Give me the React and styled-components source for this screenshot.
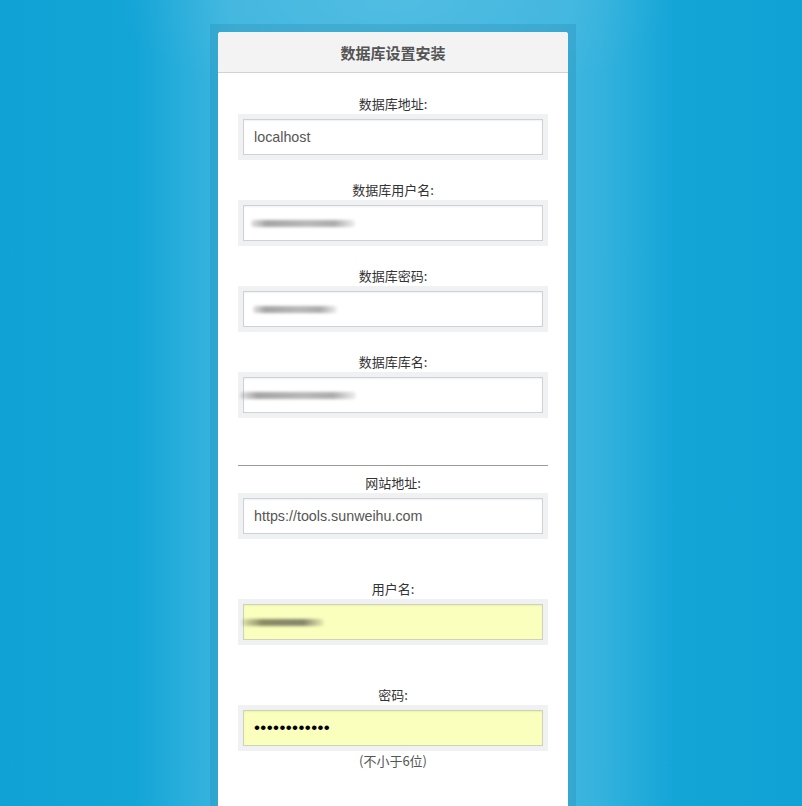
import React from 'react';
import styled, { createGlobalStyle } from 'styled-components';

const GlobalStyle = createGlobalStyle`
  html, body {
    margin: 0;
    padding: 0;
    height: 100%;
  }
  body {
    font-family: "Noto Sans CJK SC", "Liberation Sans", sans-serif;
    background: #12a4d6;
  }
`;

const Page = styled.div`
  min-height: 806px;
  display: flex;
  justify-content: center;
  padding: 24px 16px 0 0;
  box-sizing: border-box;
  overflow: hidden;
  background:
    radial-gradient(ellipse 280px 110px at 393px 0, rgba(255,255,255,0.1), rgba(255,255,255,0) 100%),
    linear-gradient(90deg, #11a2d5 0%, #14a5d7 17%, #34b2dd 26%, #3db5df 29%, #3db5df 71%, #34b2dd 75%, #14a5d7 84%, #11a2d5 100%);
`;

const Frame = styled.div`
  padding: 8px 8px 0;
  background: rgba(0, 70, 110, 0.12);
  height: 790px;
`;

const Card = styled.div`
  width: 350px;
  height: 100%;
  background: #fff;
  border-radius: 3px 3px 0 0;
`;

const Header = styled.div`
  height: 40px;
  background: #f3f3f3;
  border-bottom: 1px solid #d2d2d2;
  border-radius: 3px 3px 0 0;
  display: flex;
  align-items: center;
  justify-content: center;
  font-size: 15px;
  font-weight: bold;
  color: #555;
`;

const Body = styled.div`
  padding: 21px 20px 0;
  display: flex;
  flex-direction: column;
`;

const Group = styled.div`
  margin-bottom: ${(p) => p.$gap}px;
`;

const Label = styled.div`
  height: 20px;
  line-height: 20px;
  text-align: center;
  font-size: 13px;
  color: #333;
`;

const Well = styled.div`
  background: #eff1f2;
  padding: 5px;
  position: relative;
`;

const Field = styled.input`
  display: block;
  width: 100%;
  height: 36px;
  box-sizing: border-box;
  border: 1px solid ${(p) => (p.$filled ? '#cfd2b4' : '#cfd2d4')};
  background: ${(p) => (p.$filled ? '#faffbd' : '#fff')};
  box-shadow: inset 0 1px 2px rgba(0, 0, 0, 0.06);
  padding: 0 10px;
  font-family: "Liberation Sans", "Open Sans", sans-serif;
  font-size: 14.3px;
  color: #555;
  outline: none;
  &[type='password'] {
    color: #000;
    font-size: 17px;
    letter-spacing: 0.4px;
  }
`;

const Smudge = styled.span`
  position: absolute;
  left: ${(p) => p.$left}px;
  top: 20px;
  width: ${(p) => p.$w}px;
  height: 7px;
  border-radius: 3px;
  background: ${(p) => p.$tint};
  filter: blur(1.4px);
  pointer-events: none;
`;

const Divider = styled.hr`
  margin: 0 0 7px;
  border: 0;
  border-top: 1px solid #9a9a9a;
`;

const Hint = styled.div`
  text-align: center;
  font-size: 13px;
  color: #555;
  line-height: 20px;
`;

const smudgeGray = 'linear-gradient(90deg, rgba(140,140,140,0.25), #a4a4a4 15%, #b8b8b8 55%, #ababab 80%, rgba(200,200,200,0.3))';
const smudgeOlive = 'linear-gradient(90deg, rgba(120,120,80,0.2), #8a8a66 25%, #85856c 75%, rgba(180,180,140,0.2))';

export default function App() {
  return (
    <>
      <GlobalStyle />
      <Page>
        <Frame>
          <Card>
            <Header>数据库设置安装</Header>
            <Body>
              <Group $gap={20}>
                <Label>数据库地址:</Label>
                <Well>
                  <Field defaultValue="localhost" readOnly />
                </Well>
              </Group>
              <Group $gap={20}>
                <Label>数据库用户名:</Label>
                <Well>
                  <Field readOnly />
                  <Smudge $left={13} $w={104} $tint={smudgeGray} />
                </Well>
              </Group>
              <Group $gap={20}>
                <Label>数据库密码:</Label>
                <Well>
                  <Field readOnly />
                  <Smudge $left={15} $w={84} $tint={smudgeGray} />
                </Well>
              </Group>
              <Group $gap={47}>
                <Label>数据库库名:</Label>
                <Well>
                  <Field readOnly />
                  <Smudge $left={2} $w={116} $tint={smudgeGray} />
                </Well>
              </Group>
              <Divider />
              <Group $gap={40}>
                <Label>网站地址:</Label>
                <Well>
                  <Field defaultValue="https://tools.sunweihu.com" readOnly />
                </Well>
              </Group>
              <Group $gap={40}>
                <Label>用户名:</Label>
                <Well>
                  <Field $filled readOnly />
                  <Smudge $left={4} $w={82} $tint={smudgeOlive} />
                </Well>
              </Group>
              <Group $gap={0}>
                <Label>密码:</Label>
                <Well>
                  <Field $filled type="password" defaultValue="abcdefghijkl" readOnly />
                </Well>
                <Hint>(不小于6位)</Hint>
              </Group>
            </Body>
          </Card>
        </Frame>
      </Page>
    </>
  );
}
